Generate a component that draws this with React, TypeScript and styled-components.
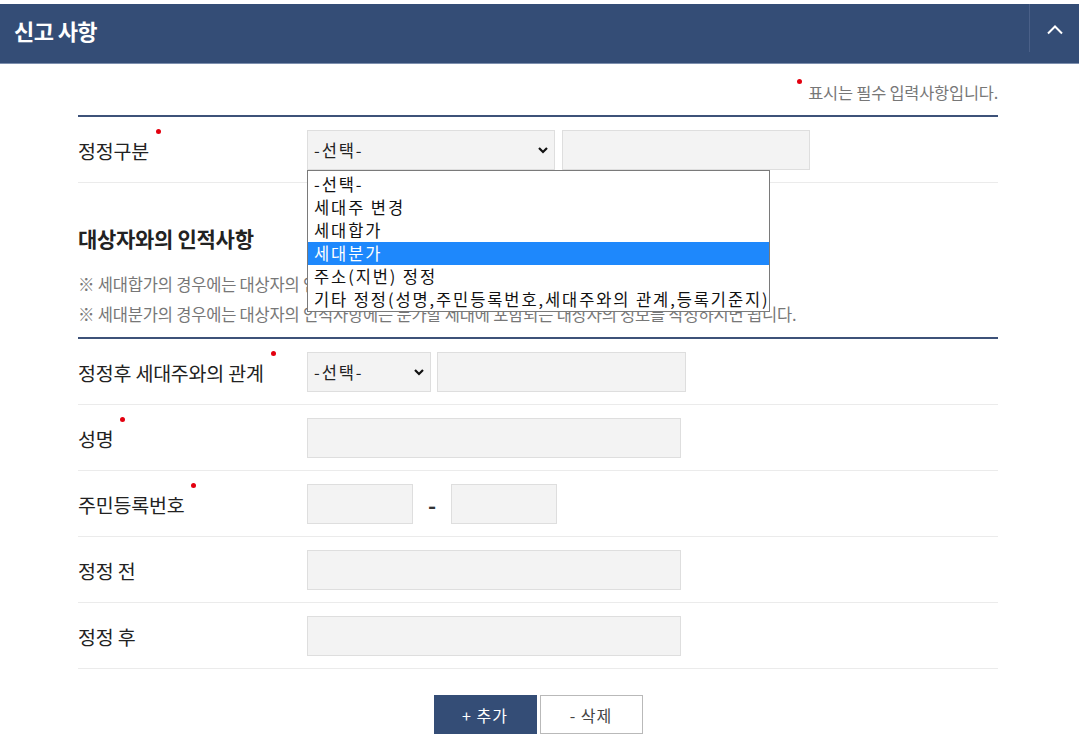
import React from 'react';
import styled, { createGlobalStyle } from 'styled-components';

const GlobalStyle = createGlobalStyle`
  body {
    margin: 0;
    background: #fff;
    font-family: 'Noto Sans CJK KR', 'Noto Sans', sans-serif;
    color: #333;
  }
  * { box-sizing: border-box; }
`;

const Page = styled.div`
  width: 1079px;
  padding-top: 4px;
`;

const Header = styled.header`
  height: 60px;
  background: #344d76;
  border-bottom: 1px solid #7d8fae;
  display: flex;
  align-items: stretch;
  justify-content: space-between;
`;

const Title = styled.h2`
  margin: 0;
  padding-left: 14px;
  display: flex;
  align-items: center;
  color: #fff;
  font-size: 22px;
  font-weight: 700;
  letter-spacing: -0.6px;
  padding-bottom: 8px;
`;

const Toggle = styled.button`
  width: 50px;
  border: 0;
  border-left: 1px solid #4a6088;
  background: transparent;
  margin-bottom: 11px;
  display: flex;
  align-items: flex-start;
  justify-content: center;
  padding: 20px 0 0 0;
  cursor: pointer;
`;

const Body = styled.div`
  padding: 0 81px 0 78px;
`;

const RequiredNote = styled.p`
  margin: 0;
  padding-top: 17px;
  margin-bottom: 12px;
  text-align: right;
  font-size: 16.4px;
  line-height: 22px;
  color: #777;
  letter-spacing: -0.2px;
`;

const Dot = styled.span`
  display: inline-block;
  width: 5px;
  height: 5px;
  border-radius: 50%;
  background: #e3000f;
  margin-left: 7px;
  position: relative;
  top: -25px;
`;

const NoteDot = styled(Dot)`
  top: -15px;
  margin-left: 0;
  margin-right: 6px;
`;

const Table = styled.div`
  border-top: 2px solid #3d5279;
`;

const Row = styled.div`
  display: grid;
  grid-template-columns: 229px 1fr;
  align-items: center;
  height: 66px;
  border-bottom: 1px solid #ebebeb;
`;

const Label = styled.div`
  font-size: 19.5px;
  font-weight: 400;
  color: #222;
  letter-spacing: -0.2px;
  padding-top: 2px;
  white-space: nowrap;
`;

const Field = styled.div<{ gap?: number }>`
  display: flex;
  align-items: center;
  gap: ${(p) => p.gap ?? 6}px;
`;

const SelectWrap = styled.div<{ w: number }>`
  position: relative;
  width: ${(p) => p.w}px;
  height: 40px;
`;

const Select = styled.select`
  appearance: none;
  width: 100%;
  height: 100%;
  border: 1px solid #dedede;
  background: #f3f3f3;
  padding: 0 6px;
  font-family: inherit;
  font-size: 16.5px;
  letter-spacing: 1.9px;
  color: #222;
`;

const Caret = styled.span`
  position: absolute;
  right: 6px;
  top: 14px;
  pointer-events: none;
  display: flex;
`;

const Input = styled.input<{ w: number }>`
  width: ${(p) => p.w}px;
  height: 40px;
  border: 1px solid #dedede;
  background: #f3f3f3;
`;

const Dash = styled.span`
  width: 26px;
  text-align: center;
  font-size: 22px;
  font-weight: 700;
  color: #333;
`;

const OptionList = styled.ul`
  position: absolute;
  left: 0;
  top: 40px;
  width: 463px;
  margin: 0;
  padding: 2px 0 0;
  list-style: none;
  background: #fff;
  border: 1px solid #7a7a7a;
  z-index: 5;
`;

const Option = styled.li<{ active?: boolean }>`
  height: 23px;
  line-height: 23px;
  padding-left: 6px;
  font-size: 16.5px;
  letter-spacing: 1.9px;
  white-space: nowrap;
  color: ${(p) => (p.active ? '#fff' : '#111')};
  background: ${(p) => (p.active ? '#1e88fc' : 'transparent')};
`;

const SectionTitle = styled.h3`
  margin: 41px 0 0;
  font-size: 21px;
  line-height: 28px;
  font-weight: 700;
  letter-spacing: -0.3px;
  color: #222;
`;

const Notes = styled.div`
  margin: 17px 0 8px;
  font-size: 16.5px;
  line-height: 30px;
  color: #777;
  letter-spacing: -0.2px;
  white-space: nowrap;
`;

const Buttons = styled.div`
  display: flex;
  justify-content: center;
  gap: 3px;
  margin-top: 26px;
`;

const Btn = styled.button<{ primary?: boolean }>`
  width: 103px;
  height: 39px;
  font-family: inherit;
  font-size: 16px;
  letter-spacing: 1px;
  border: 1px solid ${(p) => (p.primary ? '#344d76' : '#b9b9b9')};
  background: ${(p) => (p.primary ? '#344d76' : '#fff')};
  color: ${(p) => (p.primary ? '#fff' : '#444')};
  cursor: pointer;
`;

const ChevronDown = () => (
  <svg width="12" height="12" viewBox="0 0 12 12">
    <path d="M2 4l4 4 4-4" fill="none" stroke="#111" strokeWidth="2.2" />
  </svg>
);

const options = [
  '-선택-',
  '세대주 변경',
  '세대합가',
  '세대분가',
  '주소(지번) 정정',
  '기타 정정(성명,주민등록번호,세대주와의 관계,등록기준지)',
];

export default function App() {
  return (
    <Page>
      <GlobalStyle />
      <Header>
        <Title>신고 사항</Title>
        <Toggle aria-label="접기">
          <svg width="18" height="11" viewBox="0 0 18 11">
            <path d="M2 9.5l7-7 7 7" fill="none" stroke="#fff" strokeWidth="2" />
          </svg>
        </Toggle>
      </Header>
      <Body>
        <RequiredNote>
          <NoteDot />
          표시는 필수 입력사항입니다.
        </RequiredNote>

        <Table>
          <Row>
            <Label>
              정정구분
              <Dot />
            </Label>
            <Field gap={7}>
              <SelectWrap w={248}>
                <Select defaultValue="-선택-">
                  {options.map((o) => (
                    <option key={o}>{o}</option>
                  ))}
                </Select>
                <Caret>
                  <ChevronDown />
                </Caret>
                <OptionList>
                  {options.map((o) => (
                    <Option key={o} active={o === '세대분가'}>
                      {o}
                    </Option>
                  ))}
                </OptionList>
              </SelectWrap>
              <Input w={248} />
            </Field>
          </Row>
        </Table>

        <SectionTitle>대상자와의 인적사항</SectionTitle>
        <Notes>
          <div>※ 세대합가의 경우에는 대상자의 인적사항을 입력하시면 됩니다.</div>
          <div>※ 세대분가의 경우에는 대상자의 인적사항에는 분가할 세대에 포함되는 대상자의 정보를 작성하시면 됩니다.</div>
        </Notes>

        <Table>
          <Row>
            <Label>
              정정후 세대주와의 관계
              <Dot />
            </Label>
            <Field>
              <SelectWrap w={124}>
                <Select defaultValue="-선택-">
                  <option>-선택-</option>
                </Select>
                <Caret>
                  <ChevronDown />
                </Caret>
              </SelectWrap>
              <Input w={249} />
            </Field>
          </Row>
          <Row>
            <Label>
              성명
              <Dot />
            </Label>
            <Field>
              <Input w={374} />
            </Field>
          </Row>
          <Row>
            <Label>
              주민등록번호
              <Dot />
            </Label>
            <Field>
              <Input w={106} />
              <Dash>-</Dash>
              <Input w={106} />
            </Field>
          </Row>
          <Row>
            <Label>정정 전</Label>
            <Field>
              <Input w={374} />
            </Field>
          </Row>
          <Row>
            <Label>정정 후</Label>
            <Field>
              <Input w={374} />
            </Field>
          </Row>
        </Table>

        <Buttons>
          <Btn primary>+ 추가</Btn>
          <Btn>- 삭제</Btn>
        </Buttons>
      </Body>
    </Page>
  );
}
